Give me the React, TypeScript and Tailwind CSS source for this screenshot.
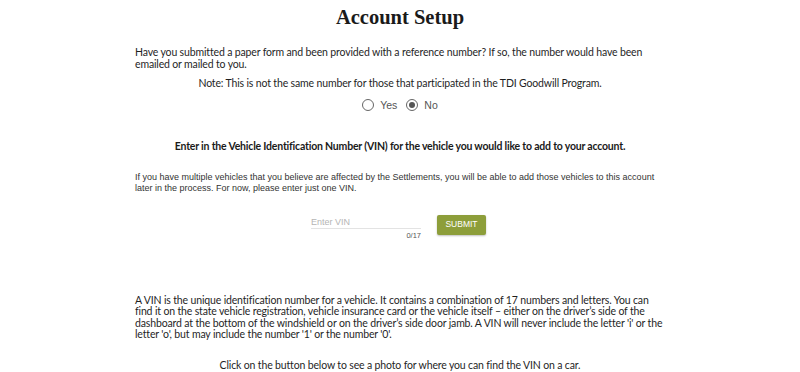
import { useState } from "react";

export default function App() {
  const [choice, setChoice] = useState<"yes" | "no">("no");
  const [vin, setVin] = useState("");

  return (
    <div className="min-h-screen bg-white text-[#222]">
      <div className="mx-auto w-[530px] pt-[4px]">
        <h1 className="text-center font-['Liberation_Serif',serif] text-[20.5px] font-bold leading-[26px] text-[#1a1a1a]">
          Account Setup
        </h1>

        <div className="font-['Lato',sans-serif] text-[10.5px] leading-[11.5px] tracking-[-0.15px] text-[#1f1f1f]">
          <p className="mt-[17px]">
            Have you submitted a paper form and been provided with a reference number? If so, the number would have
            been emailed or mailed to you.
          </p>
          <p className="mt-[8px] text-center">
            Note: This is not the same number for those that participated in the TDI Goodwill Program.
          </p>
        </div>

        <div className="mt-[9px] flex items-center justify-center gap-[9px] font-['Liberation_Sans',sans-serif] text-[10.5px] leading-[12px] text-[#555]">
          <Radio label="Yes" checked={choice === "yes"} onClick={() => setChoice("yes")} />
          <Radio label="No" checked={choice === "no"} onClick={() => setChoice("no")} />
        </div>

        <h2 className="mt-[28px] text-center font-['Lato',sans-serif] text-[10.5px] font-bold leading-[14px] tracking-[-0.2px] text-[#1a1a1a]">
          Enter in the Vehicle Identification Number (VIN) for the vehicle you would like to add to your account.
        </h2>

        <p className="mt-[19px] font-['Liberation_Sans',sans-serif] text-[9px] leading-[11px] text-[#333]">
          If you have multiple vehicles that you believe are affected by the Settlements, you will be able to add those
          vehicles to this account later in the process. For now, please enter just one VIN.
        </p>

        <div className="mt-[21px] flex items-start justify-center gap-[16px] pr-[3px]">
          <div className="w-[110px] font-['Liberation_Sans',sans-serif]">
            <input
              value={vin}
              maxLength={17}
              onChange={(e) => setVin(e.target.value)}
              placeholder="Enter VIN"
              className="block h-[14px] w-full border-b border-[#e3e3e3] bg-transparent pt-[1px] text-[9px] leading-[12px] text-[#333] outline-none placeholder:text-[#b5b5b5]"
            />
            <div className="mt-[2px] text-right text-[7.5px] leading-[10px] text-[#555]">{vin.length}/17</div>
          </div>
          <button
            type="button"
            className="h-[20px] w-[49px] rounded-[2px] bg-[#8d9e3a] font-['Liberation_Sans',sans-serif] text-[8.5px] text-white shadow-[0_1px_2px_rgba(0,0,0,0.25)]"
          >
            SUBMIT
          </button>
        </div>

        <div className="font-['Lato',sans-serif] text-[10.5px] leading-[11.5px] tracking-[-0.15px] text-[#1f1f1f]">
          <p className="mt-[54px]">
            A VIN is the unique identification number for a vehicle. It contains a combination of 17 numbers and
            letters. You can find it on the state vehicle registration, vehicle insurance card or the vehicle itself –
            either on the driver’s side of the dashboard at the bottom of the windshield or on the driver’s side door
            jamb. A VIN will never include the letter 'i' or the letter 'o', but may include the number '1' or the
            number '0'.
          </p>
          <p className="mt-[19px] text-center">
            Click on the button below to see a photo for where you can find the VIN on a car.
          </p>
        </div>
      </div>
    </div>
  );
}

function Radio({ label, checked, onClick }: { label: string; checked: boolean; onClick: () => void }) {
  return (
    <button type="button" onClick={onClick} className="flex items-center gap-[6px]">
      <span className="flex h-[12px] w-[12px] items-center justify-center rounded-full border border-[#666] bg-white">
        {checked && <span className="h-[6px] w-[6px] rounded-full bg-[#555]" />}
      </span>
      <span>{label}</span>
    </button>
  );
}
